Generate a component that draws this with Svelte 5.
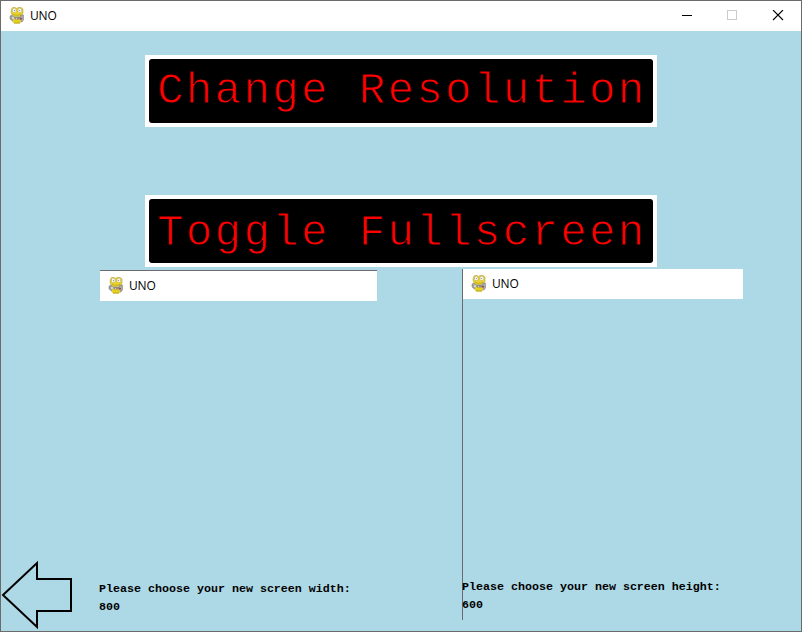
<script>
  const menu = [
    { label: 'Change Resolution', low: false },
    { label: 'Toggle Fullscreen', low: true }
  ];
  const prompts = [
    { side: 'left', text: 'Please choose your new screen width:', value: '800' },
    { side: 'right', text: 'Please choose your new screen height:', value: '600' }
  ];
</script>

{#snippet snake()}
  <svg class="snake" width="16" height="17" viewBox="0 0 16 17">
    <path d="M3 1 4 .5H6L7.500 1.500 9 .5H12L14 2V6L13 8.500 10 9.500H5L2.500 7 2 4Z" fill="#ead42a" stroke="#a8932c" stroke-width=".5" />
    <path d="M1 9 3 8 5 10 6 13 4 14.500 1 12Z" fill="#a5a39b" stroke="#7d7b74" stroke-width=".5" />
    <path d="M12 8H14.500V13L13 15H10L10 11Z" fill="#aaa8a0" stroke="#7d7b74" stroke-width=".5" />
    <path d="M4 12.500 6 11H11L12 14 11 16.500H5L4 15Z" fill="#e6d020" />
    <path d="M5 10H12V12.500H6Z" fill="#8f8d84" />
    <path d="M3 10H5V12H3ZM7 11H8V12H7Z" fill="#d5d4cf" />
    <path d="M11 11H13V12.500H11Z" fill="#a34e46" />
    <path d="M5 16H11" stroke="#b39c24" stroke-width=".8" />
    <path d="M3.500 2 4.500 1.200H6L7 2.300V4.500L6 5.500H4.500L3.500 4.500Z" fill="#f4f4ee" stroke="#a9a678" stroke-width=".5" />
    <path d="M9 2 10 1.200H11.500L12.700 2.300V4.500L11.500 5.500H10L9 4.500Z" fill="#f4f4ee" stroke="#a9a678" stroke-width=".5" />
    <path d="M5 3H6V4H5ZM10 3H11V4H10Z" fill="#999" />
    <path d="M4 7 6 8.200H10L12 7" stroke="#b49d22" stroke-width=".7" fill="none" />
  </svg>
{/snippet}

<div class="window">
  <header class="titlebar">
    {@render snake()}
    <span class="name">UNO</span>
    <div class="controls">
      <svg width="102" height="12" viewBox="0 0 102 12" fill="none" shape-rendering="crispEdges">
        <path d="M0 5.500H10" stroke="#000" />
        <rect x="45.500" y=".5" width="9" height="9" stroke="#ccc" />
        <path d="M91 0 101 10M101 0 91 10" stroke="#000" stroke-width="1.100" shape-rendering="auto" />
      </svg>
    </div>
  </header>

  <main>
    <nav>
      {#each menu as item}
        <button class:low={item.low}><span>{item.label}</span></button>
      {/each}
    </nav>
    <section class="panels">
      {#each prompts as p}
        <div class="panel {p.side}">
          <div class="bar">{@render snake()}<span class="name">UNO</span></div>
          <div class="prompt">
            <p>{p.text}</p>
            <p>{p.value}</p>
          </div>
        </div>
      {/each}
    </section>
    <svg class="back" width="74" height="70" viewBox="0 0 74 70" fill="none">
      <path d="M2 35 36 3V19H70V51H36V67Z" stroke="#000" stroke-width="2" />
    </svg>
  </main>
</div>

<style>
  .window {
    box-sizing: border-box;
    width: 802px;
    height: 632px;
    border: 1px solid #6b6b6d;
    background: #add8e6;
    overflow: hidden;
    font-family: "Open Sans", "Noto Sans", sans-serif;
  }
  .titlebar {
    display: flex;
    align-items: center;
    height: 30px;
    box-sizing: border-box;
    padding: 0 0 1px 8px;
    background: #fff;
  }
  .snake {
    display: block;
    flex: none;
  }
  .name {
    margin-left: 5px;
    font-size: 12px;
    line-height: 16px;
    letter-spacing: -0.2px;
    color: #000;
  }
  .controls {
    margin-left: auto;
    margin-right: 17px;
  }
  .controls svg {
    display: block;
  }
  main {
    position: relative;
    height: 600px;
  }
  nav {
    display: flex;
    flex-direction: column;
    gap: 68px;
    width: 512px;
    margin-left: 144px;
    padding-top: 24px;
  }
  button {
    display: block;
    width: 512px;
    height: 72px;
    padding: 4px;
    border: 0;
    background: #fff;
  }
  button span {
    display: block;
    box-sizing: border-box;
    height: 64px;
    padding-left: 8px;
    border-radius: 3px;
    background: #000;
    color: #f00;
    font: 44px/65px "Liberation Mono", monospace;
    letter-spacing: 2.4px;
    text-align: left;
    white-space: pre;
    -webkit-text-stroke: 1px #000;
  }
  button.low span {
    line-height: 69px;
  }
  .panels {
    display: flex;
    align-items: flex-start;
    padding: 2px 0 0 99px;
  }
  .panel {
    box-sizing: border-box;
  }
  .left {
    width: 277px;
    margin-top: 1px;
    border-top: 1px solid #6b6b6d;
  }
  .right {
    width: 281px;
    height: 351px;
    margin-left: 85px;
    border-left: 1px solid #6b6b6d;
  }
  .bar {
    display: flex;
    align-items: center;
    box-sizing: border-box;
    height: 30px;
    padding: 0 0 1px 8px;
    background: #fff;
  }
  .prompt {
    padding-top: 279px;
    margin-left: -1px;
    font: bold 11.667px/18px "Liberation Mono", monospace;
    color: #000;
  }
  p {
    margin: 0;
    white-space: nowrap;
  }
  .back {
    position: absolute;
    left: 0;
    top: 529px;
  }
</style>
